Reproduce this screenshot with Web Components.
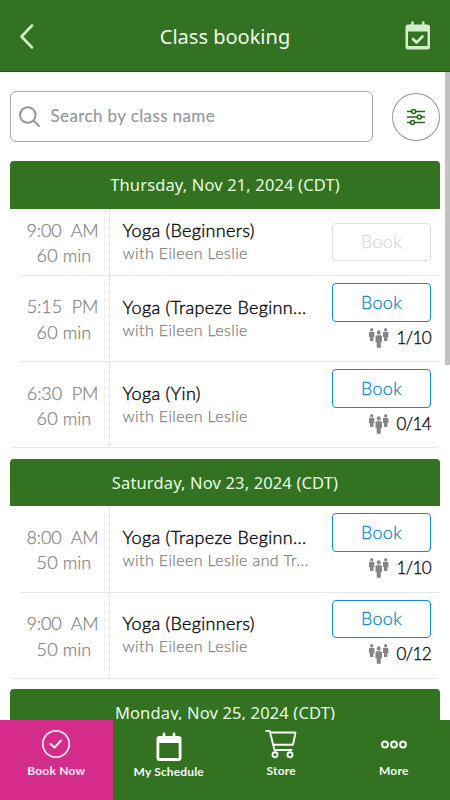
<!DOCTYPE html>
<html lang="en">
<head>
<meta charset="utf-8">
<meta name="viewport" content="width=device-width, initial-scale=1">
<title>Class booking</title>
<style>
html, body { margin: 0; height: 100%; overflow: hidden; }
body { background: #fff; font-family: Lato, sans-serif; }
</style>
</head>
<body>
<booking-app>
    <app-header slot="header">Class booking</app-header>
    <class-search>Search by class name</class-search>
    <class-day label="Thursday, Nov 21, 2024 (CDT)">
        <class-row time="9:00" half="AM" length="60 min" disabled>Yoga (Beginners)<span slot="with">with Eileen Leslie</span></class-row>
        <class-row time="5:15" half="PM" length="60 min" spots="1/10">Yoga (Trapeze Beginn...<span slot="with">with Eileen Leslie</span></class-row>
        <class-row time="6:30" half="PM" length="60 min" spots="0/14">Yoga (Yin)<span slot="with">with Eileen Leslie</span></class-row>
    </class-day>
    <class-day label="Saturday, Nov 23, 2024 (CDT)">
        <class-row time="8:00" half="AM" length="50 min" spots="1/10">Yoga (Trapeze Beginn...<span slot="with">with Eileen Leslie and Tr...</span></class-row>
        <class-row time="9:00" half="AM" length="50 min" spots="0/12">Yoga (Beginners)<span slot="with">with Eileen Leslie</span></class-row>
    </class-day>
    <class-day label="Monday, Nov 25, 2024 (CDT)"></class-day>
    <nav-bar slot="nav">
        <nav-item icon="check" active>Book Now</nav-item>
        <nav-item icon="calendar">My Schedule</nav-item>
        <nav-item icon="cart">Store</nav-item>
        <nav-item icon="more">More</nav-item>
    </nav-bar>
</booking-app>

<script>
// ── App shell ───────────────────────────────────────────
class BookingApp extends HTMLElement {
    connectedCallback() {
        this.attachShadow({ mode: 'open' }).innerHTML = `
<style>
:host {
    display: flex; flex-direction: column; position: relative;
    height: 800px; width: 450px; overflow: hidden;
    --green: #327221; --blue: #1788c4; --pink: #d32c8b;
}
main { flex: 1; min-height: 0; overflow: hidden; padding: 19px 10px 0; }
.thumb { position: absolute; top: 72px; right: 0; width: 5px; height: 293px; background: #c1c1c1; }
</style>
<slot name="header"></slot>
<main><slot></slot></main>
<slot name="nav"></slot>
<div class="thumb"></div>`;
    }
}
customElements.define('booking-app', BookingApp);

// ── Header ──────────────────────────────────────────────
class AppHeader extends HTMLElement {
    connectedCallback() {
        this.attachShadow({ mode: 'open' }).innerHTML = `
<style>
:host {
    display: flex; align-items: center; justify-content: space-between;
    box-sizing: border-box; flex: none; height: 72px; padding: 0 18px;
    background: var(--green); border-bottom: 1px solid #1f5713;
    color: #f4fff0; font: 20px/28px "Noto Sans", sans-serif;
}
.title { padding-top: 3px; }
svg { display: block; width: 28px; height: 32px; }
</style>
<svg viewBox="0 0 28 32" fill="none" stroke="#d3edcb" stroke-width="2.6" stroke-linecap="round" stroke-linejoin="round"><path d="M14 5.500 3.500 16.500 14 27.500"/></svg>
<span class="title"><slot></slot></span>
<svg viewBox="0 0 28 32" fill="none" stroke="#d3edcb">
    <path fill="#d3edcb" stroke="none" fill-rule="evenodd" d="M4 4.500h19.500q2.500 0 2.500 2.500v20q0 2.500-2.500 2.500H4q-2.500 0-2.500-2.500V7q0-2.500 2.500-2.500ZM4 11.500v14.500h19.500V11.500Z"/>
    <path stroke-width="2.500" stroke-linecap="round" d="M8.500 2.500v4M19.300 2.500v4"/>
    <path stroke-width="2.600" stroke-linecap="round" stroke-linejoin="round" d="m9 19 3.500 3.500 6-6"/>
</svg>`;
    }
}
customElements.define('app-header', AppHeader);

// ── Search field + filter button ────────────────────────
class ClassSearch extends HTMLElement {
    connectedCallback() {
        this.attachShadow({ mode: 'open' }).innerHTML = `
<style>
:host { display: flex; align-items: center; gap: 19px; height: 51px; margin-bottom: 19px; }
.field {
    box-sizing: border-box; width: 363.500px; height: 51px; padding: 0 7.500px;
    display: flex; align-items: center; gap: 9px;
    border: 1.500px solid #a7abaf; border-radius: 6px;
    color: #92979c; font-size: 17px; letter-spacing: .38px; white-space: nowrap;
}
.field svg { width: 23px; height: 23px; margin-top: 1px; }
.label { margin-top: -2px; -webkit-text-stroke: .15px currentColor; }
.filter {
    box-sizing: border-box; width: 48px; height: 48px; border: 1px solid #92979b;
    border-radius: 50%; display: grid; place-items: center;
}
</style>
<div class="field">
    <svg viewBox="0 0 23 23" fill="none" stroke="#92979c" stroke-width="2" stroke-linecap="round"><circle cx="8.800" cy="9" r="7.800"/><path d="m14.500 14.500 5.500 5.500"/></svg>
    <span class="label"><slot></slot></span>
</div>
<div class="filter">
    <svg width="18" height="18" viewBox="0 0 18 18" fill="#fff" stroke="#276719" stroke-width="1.600">
        <path d="M0 3.500h18M0 9h18M0 14.500h18"/>
        <circle cx="6.700" cy="3.500" r="2"/><circle cx="12.300" cy="9" r="2"/><circle cx="5.500" cy="14.500" r="2"/>
    </svg>
</div>`;
    }
}
customElements.define('class-search', ClassSearch);

// ── One day of classes ──────────────────────────────────
class ClassDay extends HTMLElement {
    connectedCallback() {
        this.attachShadow({ mode: 'open' }).innerHTML = `
<style>
:host { display: block; margin-bottom: 10.500px; }
header {
    box-sizing: border-box; height: 47.500px; padding-top: 1px;
    background: var(--green); border-radius: 4px 4px 0 0;
    color: #e9ffe2; font: 16.500px/46px "Noto Sans", sans-serif; text-align: center;
    letter-spacing: .14px; white-space: nowrap;
}
</style>
<header>${this.getAttribute('label')}</header>
<slot></slot>`;
    }
}
customElements.define('class-day', ClassDay);

// ── Class row ───────────────────────────────────────────
class ClassRow extends HTMLElement {
    connectedCallback() {
        const spots = this.getAttribute('spots');
        const person = '<circle cx="2.700" cy="1.700" r="1.600"/><path d="M1.200 3.800h3q1.200 0 1.200 1.200v4h-1v4H1V9H0V5Q0 3.800 1.200 3.800Z"/>';
        this.attachShadow({ mode: 'open' }).innerHTML = `
<style>
:host { display: flex; height: 86.200px; position: relative; font-weight: 300; -webkit-text-stroke: .25px currentColor; }
:host([disabled]) { height: 67.500px; }
:host::after {
    content: ""; position: absolute; left: 10px; right: 0; bottom: 0;
    border-bottom: 1px solid #e8e8e8;
}
:host(:last-of-type)::after { left: 0; height: 5px; border-radius: 0 0 4px 4px; }
.time {
    box-sizing: border-box; width: 100px; padding: 2px 0 0 6px; border-right: 1px dotted #d8d8d8;
    display: flex; flex-direction: column; justify-content: center;
    text-align: center; color: #858585; font-size: 18px;
    line-height: 25.700px; letter-spacing: -.1px; white-space: pre;
}
.len { padding-left: 3px; letter-spacing: .1px; }
.info {
    flex: 1; min-width: 0; padding: 0 0 3px 12.500px; white-space: nowrap;
    display: flex; flex-direction: column; justify-content: center;
}
.name { color: #0c0c0c; font-size: 18px; line-height: 23px; letter-spacing: .3px; -webkit-text-stroke-width: .4px; }
.with { color: #808080; font-size: 16px; line-height: 21px; letter-spacing: .38px; }
.side {
    width: 99px; padding-right: 9px;
    display: flex; flex-direction: column; align-items: flex-end;
}
button {
    box-sizing: border-box; flex: none; width: 99px; height: 38.500px; margin-top: 7px; padding: 0;
    background: #fff; border: 1px solid var(--blue); border-radius: 4px;
    color: var(--blue); font: 300 18px/35px Lato, sans-serif; letter-spacing: .3px;
    -webkit-text-stroke: .3px currentColor;
}
button:disabled { margin-top: 14px; color: #dadada; border-color: #dfdfdf; }
.spots {
    display: flex; align-items: center; gap: 7.500px; height: 22px; margin-top: 4.500px;
    color: #111; font-size: 17px; letter-spacing: -.6px; -webkit-text-stroke-width: .35px;
}
.spots svg { width: 20px; height: 20px; margin-top: 1px; }
</style>
<div class="time"><div>${this.getAttribute('time')}  ${this.getAttribute('half')}</div><div class="len">${this.getAttribute('length')}</div></div>
<div class="info"><div class="name"><slot></slot></div><div class="with"><slot name="with"></slot></div></div>
<div class="side">
    <button ${this.hasAttribute('disabled') ? 'disabled' : ''}>Book</button>
    ${spots ? `<div class="spots"><svg viewBox="0 0 20 20" fill="#858585"><g>${person}</g><g transform="translate(14)">${person}</g><g transform="translate(6.500 2.200) scale(1.200 1.350)" stroke="#fff" stroke-width=".4" paint-order="stroke">${person}</g></svg>${spots}</div>` : ''}
</div>`;
    }
}
customElements.define('class-row', ClassRow);

// ── Bottom navigation ───────────────────────────────────
class NavBar extends HTMLElement {
    connectedCallback() {
        this.attachShadow({ mode: 'open' }).innerHTML = `
<style>
:host { display: flex; flex: none; height: 80px; background: var(--green); position: relative; }
::slotted(*) { flex: 1; }
</style>
<slot></slot>`;
    }
}
customElements.define('nav-bar', NavBar);

const NAV_ICONS = {
    check: '<circle cx="16" cy="16" r="13.200" stroke-width="1.700"/><path stroke-width="2" stroke-linecap="round" stroke-linejoin="round" d="m10.500 16 4 3.500 6.500-7"/>',
    calendar: '<path fill="#fff" stroke="none" fill-rule="evenodd" d="M6.500 8h19q3 0 3 3v19q0 3-3 3h-19q-3 0-3-3V11q0-3 3-3ZM6.300 15v15h19.400V15Z"/><path stroke-width="2.800" stroke-linecap="round" d="M11 6v4M21 6v4"/>',
    cart: '<path stroke-width="1.900" stroke-linejoin="round" d="M.5 3h4.200L9.500 22h17.800M5.200 4.500h25.300L28 16.800H8.200"/><circle cx="10" cy="26.800" r="2.500" stroke-width="1.900"/><circle cx="25" cy="26.800" r="2.500" stroke-width="1.900"/>',
    more: '<circle cx="7" cy="16.500" r="2.900" stroke-width="2"/><circle cx="16" cy="16.500" r="2.900" stroke-width="2"/><circle cx="25" cy="16.500" r="2.900" stroke-width="2"/>'
};

class NavItem extends HTMLElement {
    connectedCallback() {
        this.attachShadow({ mode: 'open' }).innerHTML = `
<style>
:host {
    display: flex; flex-direction: column; align-items: center;
    padding-top: 8px; color: #f7fff5; font-size: 12px; font-weight: 700;
    line-height: 16px; letter-spacing: .22px; white-space: nowrap;
}
:host([active]) { background: var(--pink); color: #ffe9f5; }
:host([icon=calendar]) { letter-spacing: .15px; }
:host([icon=calendar]) span { padding-top: 1px; }
svg { display: block; width: 32px; height: 32px; margin-bottom: 3px; overflow: visible; }
</style>
<svg viewBox="0 0 32 32" fill="none" stroke="currentColor">${NAV_ICONS[this.getAttribute('icon')]}</svg>
<span><slot></slot></span>`;
    }
}
customElements.define('nav-item', NavItem);
</script>
</body>
</html>
